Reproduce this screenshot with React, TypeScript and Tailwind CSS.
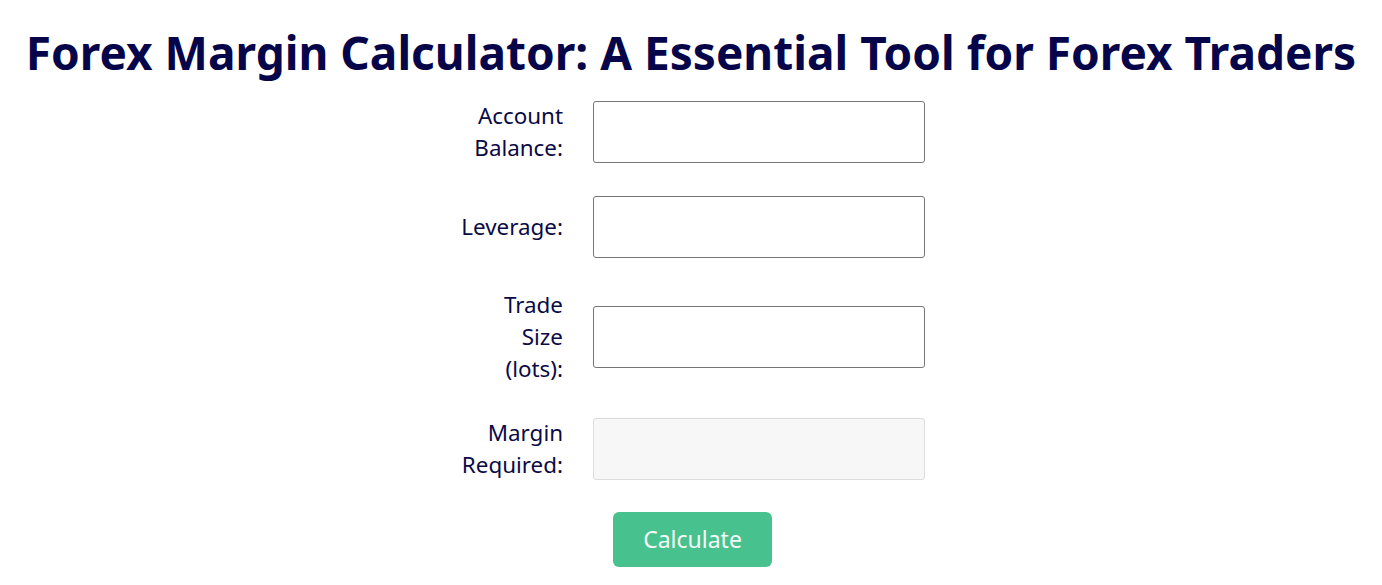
import { useState } from "react";

type Field = {
  key: string,
  label: string,
  readOnly?: boolean,
}

const fields: Field[] = [
  { key: "balance", label: "Account Balance:" },
  { key: "leverage", label: "Leverage:" },
  { key: "size", label: "Trade Size (lots):" },
  { key: "margin", label: "Margin Required:", readOnly: true },
]

export default function App() {

  const [values, setValues] = useState<Record<string, string>>({
    balance: "",
    leverage: "",
    size: "",
    margin: "",
  })

  function setValue(key: string, value: string) {
    setValues({ ...values, [key]: value })
  }

  function calculate() {
    const leverage = parseFloat(values.leverage)
    const size = parseFloat(values.size)
    if (isNaN(leverage) || isNaN(size) || leverage === 0) return
    setValues({ ...values, margin: ((size * 100000) / leverage).toFixed(2) })
  }

  return (
    <div className="min-h-screen bg-white text-[#0b0a45] font-['Noto_Sans',sans-serif]">
      <h1 className="text-center font-bold text-[46px] leading-[60px] pt-[22px] text-[#06054a] whitespace-nowrap">
        Forex Margin Calculator: A Essential Tool for Forex Traders
      </h1>
      <div className="flex flex-col items-center gap-[31.5px] mt-[18px]">
        {fields.map(field => (
          <div className="flex items-center" key={field.key}>
            <div className="w-[136px] flex justify-end pr-[30px]">
              <label htmlFor={field.key} className="w-[103px] text-right text-[22.4px] leading-[32px]">
                {field.label}
              </label>
            </div>
            <input
              id={field.key}
              type="text"
              value={values[field.key]}
              readOnly={field.readOnly}
              onChange={e => setValue(field.key, e.currentTarget.value)}
              className={field.readOnly
                ? "w-[332px] h-[62px] rounded-[3px] border border-[#dcdcdc] bg-[#f7f7f7] px-3 text-[20px]"
                : "w-[332px] h-[62px] rounded-[3px] border border-[#767676] bg-white px-3 text-[20px]"}
            />
          </div>
        ))}
        <button
          onClick={calculate}
          className="w-[159px] h-[55px] rounded-[6px] bg-[#47c18d] text-[#f4fbf7] text-[23px] ml-[3px]"
        >
          Calculate
        </button>
      </div>
    </div>
  )
}
